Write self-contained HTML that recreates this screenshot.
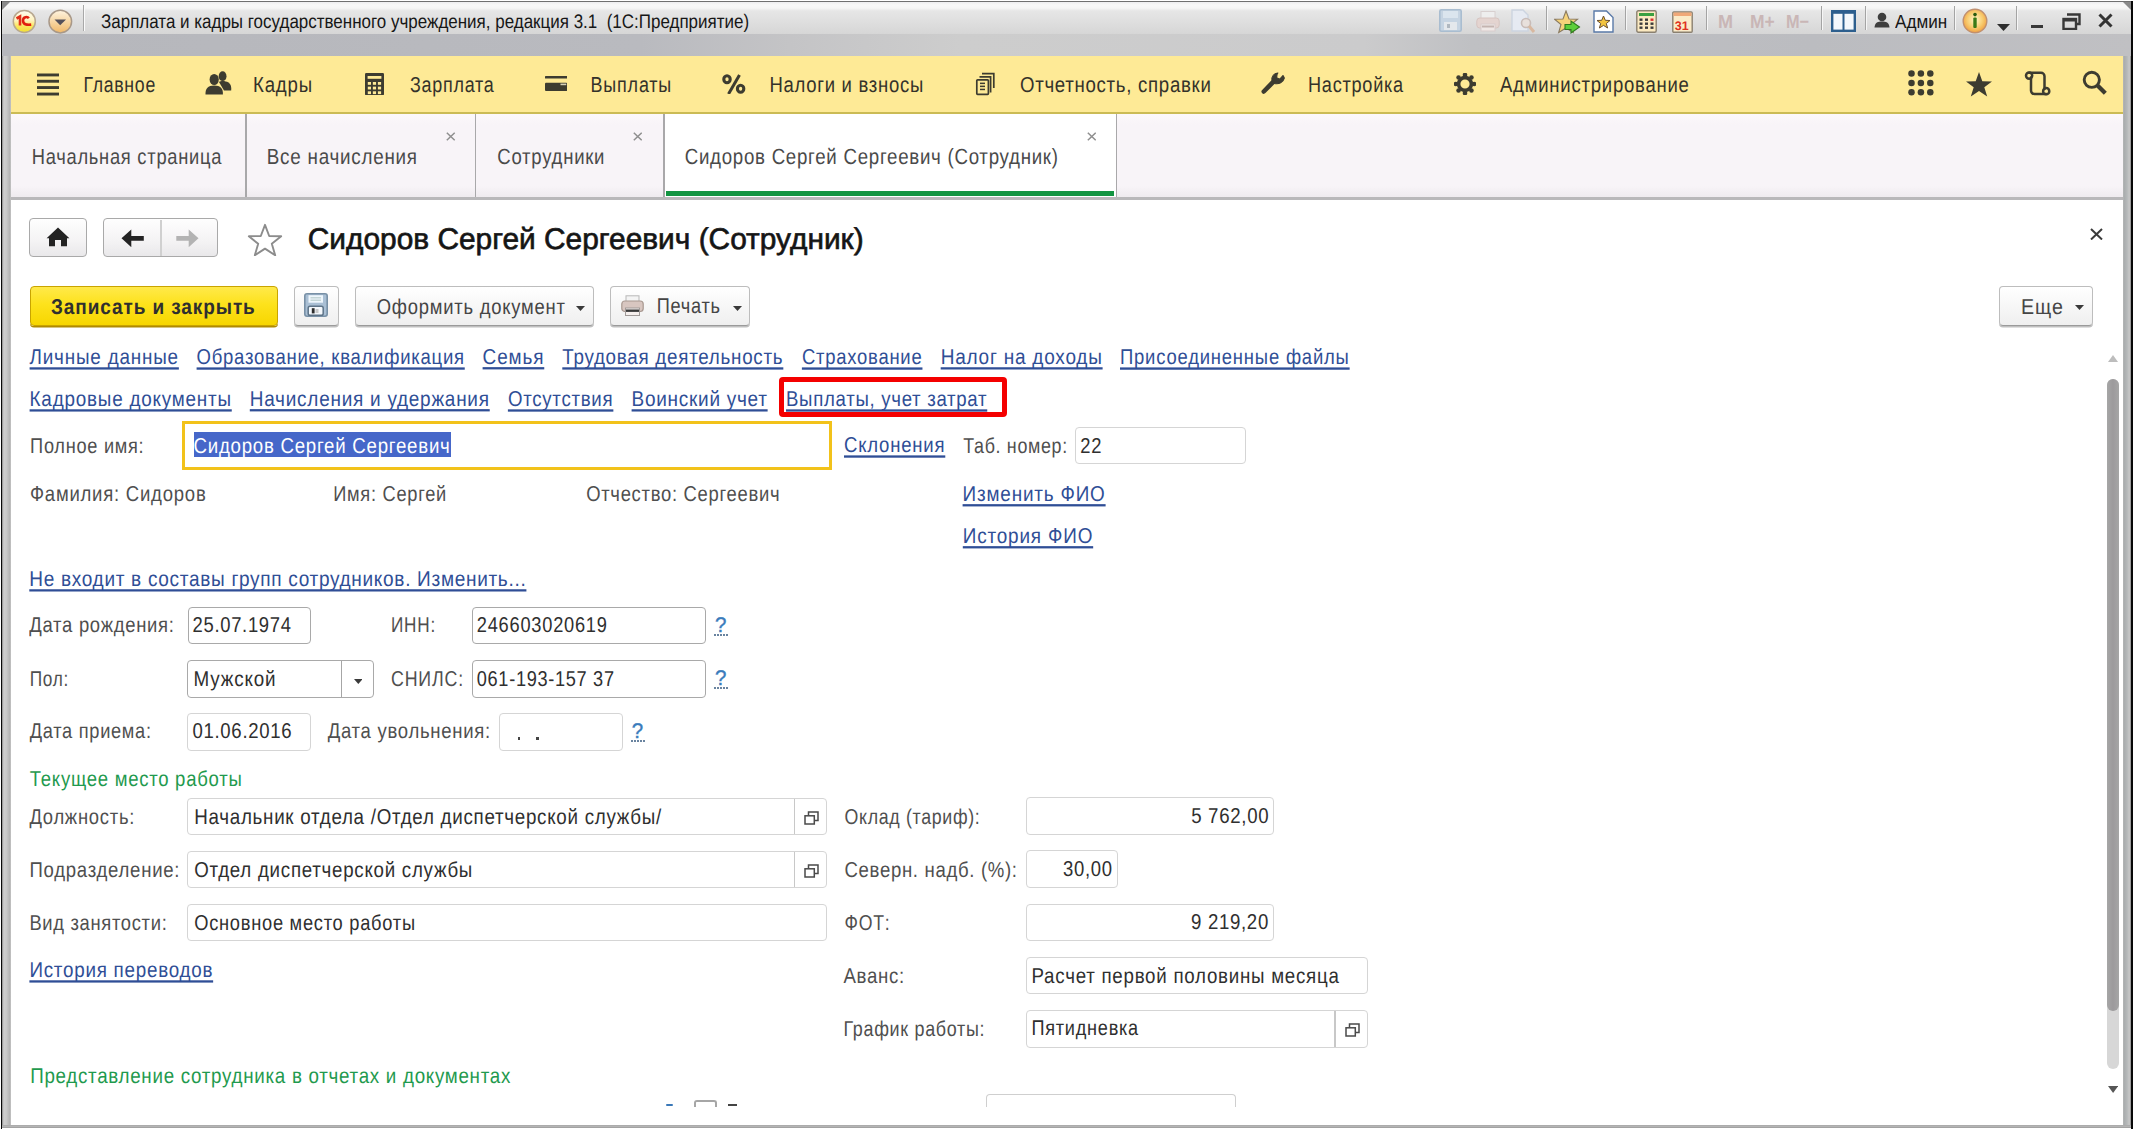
<!DOCTYPE html>
<html><head><meta charset="utf-8"><style>
html,body{margin:0;padding:0;width:2134px;height:1130px;overflow:hidden;background:#fff}
body{position:relative;font-family:"Liberation Sans",sans-serif;text-rendering:geometricPrecision}
div{position:absolute;white-space:nowrap}
.bm{display:inline-block;width:0;height:0;vertical-align:baseline}
</style></head><body>
<div style="left:0.0px;top:0.0px;width:2134.0px;height:1130.0px;background:#fff"></div>
<div style="left:2.4px;top:2.0px;width:2128.6px;height:54.0px;background:linear-gradient(#eeeef0 0px,#f8f8f8 3px,#f6f6f6 6px,#e6e6e6 9px,#e2e2e2 15px,#d6d6d6 32px,#cccccc 34px,#c6c6c8 56px)"></div>
<div style="left:2.4px;top:34.0px;width:2128.6px;height:22.0px;background:linear-gradient(90deg,#b6b7bc 0%,#b9babf 30%,#c4c4c6 37%,#cdcdcd 45%,#cbcbcc 64%,#bfc0c3 69%,#bbbcc0 85%,#c0c0c3 100%)"></div>
<div style="left:1.0px;top:1.0px;width:2132.0px;height:1.2px;background:#707070"></div>
<svg style="position:absolute;left:2.0px;top:2.0px;width:8.0px;height:8.0px" viewBox="0 0 8 8" preserveAspectRatio="none"><path d="M0 0 H8 L0 8 Z" fill="#8a8a8a"/></svg>
<svg style="position:absolute;left:2123.0px;top:2.0px;width:8.0px;height:8.0px" viewBox="0 0 8 8" preserveAspectRatio="none"><path d="M0 0 H8 V8 Z" fill="#8a8a8a"/></svg>
<div style="left:2.4px;top:55.5px;width:8.2px;height:1070.5px;background:linear-gradient(90deg,#8a8a8a 0,#cfcfcf 20%,#c8c8c8 50%,#b2b2b2 88%,#c8c8c8 100%)"></div>
<div style="left:2123.4px;top:55.5px;width:7.5px;height:1070.5px;background:linear-gradient(90deg,#c0c0c0 0,#a8abac 10%,#b5b8b9 50%,#c8c8c8 80%,#888 100%)"></div>
<div style="left:0.9px;top:1.0px;width:1.5px;height:1127.5px;background:#080808"></div>
<div style="left:2130.9px;top:1.0px;width:2.2px;height:1127.5px;background:#080808"></div>
<div style="left:2.4px;top:1124.6px;width:2128.5px;height:3.9px;background:linear-gradient(#a8a8a8,#b4b4b4 50%,#9a9a9a)"></div>
<svg style="position:absolute;left:12.0px;top:9.0px;width:25.0px;height:25.0px" viewBox="0 0 25 25" preserveAspectRatio="none"><defs><linearGradient id="g1c" x1="0" y1="0" x2="0" y2="1"><stop offset="0" stop-color="#fffef0"/><stop offset="0.45" stop-color="#fff3c0"/><stop offset="0.7" stop-color="#fbe860"/><stop offset="1" stop-color="#f2e030"/></linearGradient></defs>
<circle cx="12.3" cy="12.4" r="11" fill="url(#g1c)" stroke="#b8a890" stroke-width="1.5"/>
<path d="M4.5 9.5 L8 7.5 V16.5" fill="none" stroke="#e0301a" stroke-width="2.6"/>
<path d="M16.8 9.3 C15.5 7.3 11 7.6 11 11.5 C11 15.5 14.5 16 19.2 15.6" fill="none" stroke="#e02010" stroke-width="2.6"/></svg>
<svg style="position:absolute;left:48.0px;top:9.0px;width:25.0px;height:25.0px" viewBox="0 0 25 25" preserveAspectRatio="none"><defs><linearGradient id="gdd" x1="0" y1="0" x2="0" y2="1"><stop offset="0" stop-color="#fff4e0"/><stop offset="0.4" stop-color="#f8dcb0"/><stop offset="1" stop-color="#f0b868"/></linearGradient></defs>
<circle cx="12.3" cy="12.6" r="11.3" fill="url(#gdd)" stroke="#a89888" stroke-width="1.5"/>
<path d="M6.5 10.4 L18 10.4 L12.2 16.2 Z" fill="#54505a"/></svg>
<div style="left:83.0px;top:5.0px;width:1.2px;height:26.0px;background:#a8a8a8"></div>
<div style="left:84.2px;top:5.0px;width:1.0px;height:26.0px;background:#fafafa"></div>
<div style="left:101.0px;top:13.33px;font-size:19.20px;line-height:19.20px;color:#161616;transform:scale(0.885,1.020);transform-origin:0 16.25px;"><span class="bm"></span>Зарплата и кадры государственного учреждения, редакция 3.1&nbsp;&nbsp;(1С:Предприятие)</div>
<svg style="position:absolute;left:1439.0px;top:9.0px;width:23.0px;height:23.0px" viewBox="0 0 23 23" preserveAspectRatio="none"><rect x="0.8" y="0.8" width="21.4" height="21.4" rx="1.5" fill="#c6d4e2" stroke="#a9bdd0" stroke-width="1.6"/>
<rect x="4" y="2" width="15" height="7" fill="#dbe5ee"/><rect x="5" y="13" width="13" height="8" fill="#e4e8ec"/><rect x="8" y="15" width="3" height="4" fill="#b0b8c0"/></svg>
<svg style="position:absolute;left:1476.0px;top:11.0px;width:24.0px;height:21.0px" viewBox="0 0 24 21" preserveAspectRatio="none"><rect x="5" y="0.5" width="14" height="8" fill="#eee" stroke="#d8d0d0"/>
<rect x="0.8" y="7" width="22.4" height="10" rx="3" fill="#e4d4d0" stroke="#d6c4c0"/>
<rect x="5" y="13" width="14" height="7" fill="#efe8e6" stroke="#d8cccc"/><rect x="6" y="14.5" width="12" height="2" fill="#c4b4b0"/></svg>
<svg style="position:absolute;left:1511.0px;top:9.0px;width:25.0px;height:24.0px" viewBox="0 0 25 24" preserveAspectRatio="none"><path d="M1 1 H12 L17 6 V22 H1 Z" fill="#e6eaf2" stroke="#ccd4e0" stroke-width="1.4"/>
<circle cx="15" cy="14" r="4.5" fill="#e8e0dc" stroke="#c8bcb8" stroke-width="1.6"/><path d="M18 17 L23 23" stroke="#d8b8a0" stroke-width="3"/></svg>
<div style="left:1546.0px;top:6.0px;width:1.0px;height:24.0px;background:#a4a4a4"></div>
<div style="left:1547.0px;top:6.0px;width:1.0px;height:24.0px;background:#f6f6f6"></div>
<svg style="position:absolute;left:1554.0px;top:10.0px;width:27.0px;height:24.0px" viewBox="0 0 27 24" preserveAspectRatio="none"><path d="M12 1 L15 9 L23.5 9.3 L17 14.5 L19.3 22.5 L12 18 L4.7 22.5 L7 14.5 L0.5 9.3 L9 9 Z" fill="#f6d37a" stroke="#8a7a60" stroke-width="1.1"/>
<path d="M11 14.5 H17 V11 L25.5 17 L17 23 V19.5 H11 Z" fill="#5ccf3a" stroke="#2e7a20" stroke-width="1.1"/></svg>
<svg style="position:absolute;left:1593.0px;top:10.0px;width:21.0px;height:23.0px" viewBox="0 0 21 23" preserveAspectRatio="none"><path d="M1 1 H13.5 L20 7.5 V22 H1 Z" fill="#ffffff" stroke="#5a7aa8" stroke-width="1.4"/>
<path d="M10.5 6 L12.3 10.3 L17 10.5 L13.3 13.5 L14.6 18 L10.5 15.4 L6.4 18 L7.7 13.5 L4 10.5 L8.7 10.3 Z" fill="#f2c440" stroke="#6a5030" stroke-width="1"/></svg>
<div style="left:1625.0px;top:6.0px;width:1.0px;height:24.0px;background:#a4a4a4"></div>
<div style="left:1626.0px;top:6.0px;width:1.0px;height:24.0px;background:#f6f6f6"></div>
<svg style="position:absolute;left:1636.0px;top:10.0px;width:21.0px;height:23.0px" viewBox="0 0 21 23" preserveAspectRatio="none"><rect x="0.8" y="0.8" width="19.4" height="21.4" rx="1.5" fill="#fbe9c0" stroke="#8a8070" stroke-width="1.4"/>
<rect x="3" y="3" width="15" height="3" fill="#3aa040"/>
<g fill="#3c3c3c"><rect x="3.5" y="8.5" width="3" height="2.4"/><rect x="9" y="8.5" width="3" height="2.4"/><rect x="14.5" y="8.5" width="3" height="2.4" fill="#d83030"/>
<rect x="3.5" y="12.5" width="3" height="2.4"/><rect x="9" y="12.5" width="3" height="2.4"/><rect x="14.5" y="12.5" width="3" height="2.4"/>
<rect x="3.5" y="16.5" width="3" height="2.4"/><rect x="9" y="16.5" width="3" height="2.4"/><rect x="14.5" y="16.5" width="3" height="2.4"/></g></svg>
<svg style="position:absolute;left:1672.0px;top:10.0px;width:21.0px;height:23.0px" viewBox="0 0 21 23" preserveAspectRatio="none"><rect x="0.8" y="2" width="19.4" height="20.2" rx="1" fill="#fbebc8" stroke="#8a8070" stroke-width="1.4"/>
<rect x="1.5" y="2.5" width="18" height="3.5" fill="#f0a878"/>
<text x="2.8" y="19.5" font-family="Liberation Sans" font-weight="bold" font-size="12.5" fill="#e03020">31</text></svg>
<div style="left:1705.6px;top:6.0px;width:1.0px;height:24.0px;background:#a4a4a4"></div>
<div style="left:1706.6px;top:6.0px;width:1.0px;height:24.0px;background:#f6f6f6"></div>
<div style="left:1717.5px;top:13.01px;font-size:19.00px;line-height:19.00px;color:#c9b6b6;font-weight:bold;transform:scale(0.950,1.000);transform-origin:0 16.08px;"><span class="bm"></span>M</div>
<div style="left:1749.5px;top:13.01px;font-size:19.00px;line-height:19.00px;color:#c9b6b6;font-weight:bold;transform:scale(0.920,1.000);transform-origin:0 16.08px;"><span class="bm"></span>M+</div>
<div style="left:1785.5px;top:13.01px;font-size:19.00px;line-height:19.00px;color:#c9b6b6;font-weight:bold;transform:scale(0.860,1.000);transform-origin:0 16.08px;"><span class="bm"></span>M−</div>
<div style="left:1821.0px;top:6.0px;width:1.0px;height:24.0px;background:#a4a4a4"></div>
<div style="left:1822.0px;top:6.0px;width:1.0px;height:24.0px;background:#f6f6f6"></div>
<svg style="position:absolute;left:1831.0px;top:10.0px;width:25.0px;height:22.0px" viewBox="0 0 25 22" preserveAspectRatio="none"><rect x="1.2" y="1.2" width="22.6" height="19.6" fill="#f4f8fc" stroke="#2d5f8e" stroke-width="2.4"/>
<rect x="1.2" y="1.2" width="22.6" height="2.6" fill="#2d5f8e"/><rect x="11.5" y="2" width="2" height="19" fill="#2d5f8e"/></svg>
<div style="left:1864.5px;top:6.0px;width:1.0px;height:24.0px;background:#a4a4a4"></div>
<div style="left:1865.5px;top:6.0px;width:1.0px;height:24.0px;background:#f6f6f6"></div>
<svg style="position:absolute;left:1874.0px;top:12.0px;width:16.0px;height:16.0px" viewBox="0 0 16 16" preserveAspectRatio="none"><circle cx="8" cy="5" r="4.3" fill="#3e3e3e"/><path d="M0.5 15.5 C1 10 4 9.5 8 9.5 C12 9.5 15 10 15.5 15.5 Z" fill="#3e3e3e"/></svg>
<div style="left:1895.4px;top:12.60px;font-size:19.00px;line-height:19.00px;color:#161616;transform:scale(0.900,1.000);transform-origin:0 16.08px;"><span class="bm"></span>Админ</div>
<div style="left:1953.8px;top:6.0px;width:1.0px;height:24.0px;background:#a4a4a4"></div>
<div style="left:1954.8px;top:6.0px;width:1.0px;height:24.0px;background:#f6f6f6"></div>
<svg style="position:absolute;left:1962.0px;top:8.0px;width:26.0px;height:26.0px" viewBox="0 0 26 26" preserveAspectRatio="none"><defs><radialGradient id="gin" cx="50%" cy="45%" r="55%"><stop offset="0" stop-color="#fff8c8"/><stop offset="0.6" stop-color="#f8cc70"/><stop offset="1" stop-color="#f0a040"/></radialGradient></defs>
<circle cx="13" cy="13" r="11.8" fill="url(#gin)" stroke="#c09070" stroke-width="1.4"/>
<circle cx="13" cy="6.6" r="1.8" fill="#2a5a10"/><rect x="11.3" y="9.6" width="3.4" height="10.5" rx="1" fill="#3a7a18"/></svg>
<svg style="position:absolute;left:1996.5px;top:24.0px;width:13.0px;height:7.0px" viewBox="0 0 13 7" preserveAspectRatio="none"><path d="M0 0 H13 L6.5 7 Z" fill="#2e2e2e"/></svg>
<div style="left:2016.3px;top:6.0px;width:1.0px;height:24.0px;background:#a4a4a4"></div>
<div style="left:2017.3px;top:6.0px;width:1.0px;height:24.0px;background:#f6f6f6"></div>
<div style="left:2031.0px;top:24.5px;width:11.5px;height:3.0px;background:#383838"></div>
<svg style="position:absolute;left:2062.0px;top:13.0px;width:19.0px;height:17.0px" viewBox="0 0 19 17" preserveAspectRatio="none"><path d="M5 1.5 H17.5 V11 H14.5" fill="none" stroke="#383838" stroke-width="2.4"/><rect x="1.5" y="6" width="12.5" height="10" fill="none" stroke="#383838" stroke-width="2.4"/><rect x="1.5" y="6" width="12.5" height="2.5" fill="#383838"/></svg>
<svg style="position:absolute;left:2098.0px;top:13.0px;width:15.0px;height:15.0px" viewBox="0 0 15 15" preserveAspectRatio="none"><path d="M1.5 1.5 L13.5 13.5 M13.5 1.5 L1.5 13.5" stroke="#343434" stroke-width="3"/></svg>
<div style="left:10.5px;top:55.5px;width:2112.5px;height:56.5px;background:#feea96"></div>
<div style="left:10.5px;top:111.8px;width:2112.5px;height:2.0px;background:#cbbb55"></div>
<svg style="position:absolute;left:36.8px;top:72.5px;width:22.2px;height:23.5px" viewBox="0 0 22.2 23.5" preserveAspectRatio="none"><rect x="0" y="0.5" width="22.2" height="2.9" fill="#3d3c30"/><rect x="0" y="6.8" width="22.2" height="2.9" fill="#3d3c30"/><rect x="0" y="13.1" width="22.2" height="2.9" fill="#3d3c30"/><rect x="0" y="19.6" width="22.2" height="2.9" fill="#3d3c30"/></svg>
<div style="left:83.4px;top:77.93px;font-size:17.67px;line-height:17.67px;color:#34322a;letter-spacing:0.726px;transform:scale(1.000,1.226);transform-origin:0 14.96px;"><span class="bm"></span>Главное</div>
<svg style="position:absolute;left:204.0px;top:69.0px;width:28.0px;height:27.0px" viewBox="0 0 28 27" preserveAspectRatio="none"><g fill="#3d3c30"><ellipse cx="18.6" cy="7.2" rx="3.9" ry="4.9"/><path d="M15 13 C17 11.5 21 11.5 24.5 13.5 C27 15 27.5 18 27.2 21.5 H20 Z"/>
<ellipse cx="10.2" cy="10.5" rx="4.6" ry="5.6"/><path d="M1.5 25.5 C1.2 19.5 4 16.5 10.2 16.5 C16.5 16.5 19.2 19.5 18.9 25.5 Z"/></g></svg>
<div style="left:253.0px;top:76.84px;font-size:18.62px;line-height:18.62px;color:#34322a;letter-spacing:0.840px;transform:scale(1.000,1.164);transform-origin:0 15.76px;"><span class="bm"></span>Кадры</div>
<svg style="position:absolute;left:365.0px;top:72.7px;width:19.0px;height:22.3px" viewBox="0 0 19 22.3" preserveAspectRatio="none"><rect x="0" y="0" width="19" height="22.3" rx="1.2" fill="#3d3c30"/><rect x="2.6" y="3" width="13.8" height="2.8" fill="#feea96"/>
<g fill="#feea96"><rect x="2.8" y="9" width="3.2" height="2.8"/><rect x="7.85" y="9" width="3.2" height="2.8"/><rect x="12.9" y="9" width="3.2" height="2.8"/><rect x="2.8" y="13.65" width="3.2" height="2.8"/><rect x="7.85" y="13.65" width="3.2" height="2.8"/><rect x="12.9" y="13.65" width="3.2" height="2.8"/><rect x="2.8" y="18.3" width="3.2" height="2.8"/><rect x="7.85" y="18.3" width="3.2" height="2.8"/><rect x="12.9" y="18.3" width="3.2" height="2.8"/></g></svg>
<div style="left:410.0px;top:77.96px;font-size:17.95px;line-height:17.95px;color:#34322a;letter-spacing:0.739px;transform:scale(1.000,1.208);transform-origin:0 15.19px;"><span class="bm"></span>Зарплата</div>
<svg style="position:absolute;left:544.8px;top:76.0px;width:22.2px;height:15.0px" viewBox="0 0 22.2 15" preserveAspectRatio="none"><rect x="0" y="0" width="22.2" height="2.6" rx="0.6" fill="#3d3c30"/><rect x="0" y="6.8" width="22.2" height="8.2" rx="1" fill="#3d3c30"/><rect x="15.5" y="7.6" width="5.8" height="1.6" fill="#d9d3b8"/></svg>
<div style="left:590.6px;top:77.96px;font-size:17.95px;line-height:17.95px;color:#34322a;letter-spacing:0.815px;transform:scale(1.000,1.207);transform-origin:0 15.20px;"><span class="bm"></span>Выплаты</div>
<svg style="position:absolute;left:722.0px;top:73.5px;width:24.0px;height:20.5px" viewBox="0 0 24 20.5" preserveAspectRatio="none"><g fill="none" stroke="#3d3c30" stroke-width="3.1"><ellipse cx="5" cy="5.2" rx="3.2" ry="3.5"/><ellipse cx="18.6" cy="14.8" rx="3.2" ry="3.5"/></g><path d="M17.5 1 L6.5 20" stroke="#3d3c30" stroke-width="3"/></svg>
<div style="left:769.4px;top:76.82px;font-size:18.50px;line-height:18.50px;color:#34322a;letter-spacing:0.721px;transform:scale(1.000,1.172);transform-origin:0 15.66px;"><span class="bm"></span>Налоги и взносы</div>
<svg style="position:absolute;left:975.0px;top:72.0px;width:21.0px;height:24.0px" viewBox="0 0 21 24" preserveAspectRatio="none"><g fill="none" stroke="#3d3c30" stroke-width="1.7"><rect x="1.8" y="7.8" width="11.6" height="14.6" rx="0.8"/><path d="M4.5 4.8 H15.6 V20.5"/><path d="M7 1.6 H18.8 V16"/></g>
<g fill="#3d3c30"><rect x="5" y="10.6" width="5" height="1.5"/><rect x="5" y="13.6" width="5" height="1.5"/><rect x="5" y="16.7" width="5" height="1.5"/></g></svg>
<div style="left:1020.0px;top:76.83px;font-size:18.64px;line-height:18.64px;color:#34322a;letter-spacing:0.706px;transform:scale(1.000,1.162);transform-origin:0 15.78px;"><span class="bm"></span>Отчетность, справки</div>
<svg style="position:absolute;left:1260.0px;top:70.0px;width:28.0px;height:27.0px" viewBox="0 0 28 27" preserveAspectRatio="none"><path d="M3.8 21.5 L14.5 10.6" stroke="#3d3c30" stroke-width="4.6" stroke-linecap="round"/>
<path d="M17.8 3 C14 3.5 11.5 6.5 12 10.5 L14.5 13.5 C19 14.5 23 12.5 24.3 8 L23 5.6 L19.8 9.2 L16.6 7.8 L17 4.5 Z" fill="#3d3c30" stroke="#3d3c30" stroke-width="1.2" stroke-linejoin="round"/></svg>
<div style="left:1308.0px;top:76.78px;font-size:18.14px;line-height:18.14px;color:#34322a;letter-spacing:0.747px;transform:scale(1.000,1.195);transform-origin:0 15.35px;"><span class="bm"></span>Настройка</div>
<svg style="position:absolute;left:1454.4px;top:72.6px;width:22.0px;height:22.0px" viewBox="0 0 22 22" preserveAspectRatio="none"><g fill="#3d3c30"><circle cx="20.10" cy="11.00" r="2.3"/><circle cx="17.43" cy="17.43" r="2.3"/><circle cx="11.00" cy="20.10" r="2.3"/><circle cx="4.57" cy="17.43" r="2.3"/><circle cx="1.90" cy="11.00" r="2.3"/><circle cx="4.57" cy="4.57" r="2.3"/><circle cx="11.00" cy="1.90" r="2.3"/><circle cx="17.43" cy="4.57" r="2.3"/></g><circle cx="11" cy="11" r="6.4" fill="none" stroke="#3d3c30" stroke-width="3.6"/></svg>
<div style="left:1500.0px;top:76.81px;font-size:18.50px;line-height:18.50px;color:#34322a;letter-spacing:0.781px;transform:scale(1.000,1.171);transform-origin:0 15.66px;"><span class="bm"></span>Администрирование</div>
<svg style="position:absolute;left:1907.8px;top:69.7px;width:26.4px;height:26.3px" viewBox="0 0 26.4 26.3" preserveAspectRatio="none"><g fill="#3d3c30"><circle cx="3.50" cy="3.50" r="3.25"/><circle cx="12.90" cy="3.50" r="3.25"/><circle cx="22.30" cy="3.50" r="3.25"/><circle cx="3.50" cy="12.90" r="3.25"/><circle cx="12.90" cy="12.90" r="3.25"/><circle cx="22.30" cy="12.90" r="3.25"/><circle cx="3.50" cy="22.30" r="3.25"/><circle cx="12.90" cy="22.30" r="3.25"/><circle cx="22.30" cy="22.30" r="3.25"/></g></svg>
<svg style="position:absolute;left:1965.0px;top:70.5px;width:28.0px;height:26.0px" viewBox="0 0 28 26" preserveAspectRatio="none"><path d="M14 1 L17.3 10.2 L27 10.4 L19.3 16.3 L22.2 25.5 L14 19.9 L5.8 25.5 L8.7 16.3 L1 10.4 L10.7 10.2 Z" fill="#3d3c30"/></svg>
<svg style="position:absolute;left:2024.0px;top:70.5px;width:28.0px;height:25.5px" viewBox="0 0 28 25.5" preserveAspectRatio="none"><g fill="none" stroke="#3d3c30" stroke-width="2.5" stroke-linejoin="round" stroke-linecap="round"><path d="M5.1 1.8 H17 C19 1.8 20.5 3.3 20.5 5.3 V18"/><path d="M7 6.5 V19.5 C7 21.5 8.5 23 10.5 23 H22"/>
<circle cx="5.1" cy="4.6" r="3.1"/><circle cx="22.2" cy="20.2" r="3.1"/></g></svg>
<svg style="position:absolute;left:2082.0px;top:70.0px;width:26.0px;height:26.0px" viewBox="0 0 26 26" preserveAspectRatio="none"><circle cx="9.8" cy="9.8" r="7.6" fill="none" stroke="#3d3c30" stroke-width="2.9"/><path d="M15.3 15.3 L23.3 23.3" stroke="#3d3c30" stroke-width="4.2"/></svg>
<div style="left:10.5px;top:113.8px;width:2112.5px;height:83.7px;background:linear-gradient(#fcf8fa 0px,#f8f4f8 11px,#f8f4f8 72px,#efebef 83px)"></div>
<div style="left:10.5px;top:197.0px;width:2112.5px;height:2.5px;background:#b9b8ba"></div>
<div style="left:664.0px;top:113.8px;width:452.0px;height:83.7px;background:#ffffff"></div>
<div style="left:245.3px;top:113.8px;width:1.4px;height:83.7px;background:#a9a8aa"></div>
<div style="left:475.0px;top:113.8px;width:1.4px;height:83.7px;background:#a9a8aa"></div>
<div style="left:663.3px;top:113.8px;width:1.4px;height:83.7px;background:#a9a8aa"></div>
<div style="left:1116.0px;top:113.8px;width:1.4px;height:83.7px;background:#a9a8aa"></div>
<div style="left:665.5px;top:191.4px;width:448.2px;height:4.7px;background:#129441"></div>
<div style="left:31.7px;top:148.70px;font-size:18.32px;line-height:18.32px;color:#4a4a4a;letter-spacing:0.741px;transform:scale(1.000,1.198);transform-origin:0 15.51px;"><span class="bm"></span>Начальная страница</div>
<div style="left:266.8px;top:148.76px;font-size:18.83px;line-height:18.83px;color:#4a4a4a;letter-spacing:0.755px;transform:scale(1.000,1.166);transform-origin:0 15.94px;"><span class="bm"></span>Все начисления</div>
<div style="left:497.3px;top:148.74px;font-size:18.54px;line-height:18.54px;color:#4a4a4a;letter-spacing:0.756px;transform:scale(1.000,1.184);transform-origin:0 15.70px;"><span class="bm"></span>Сотрудники</div>
<div style="left:684.7px;top:148.74px;font-size:18.69px;line-height:18.69px;color:#4a4a4a;letter-spacing:0.727px;transform:scale(1.000,1.175);transform-origin:0 15.82px;"><span class="bm"></span>Сидоров Сергей Сергеевич (Сотрудник)</div>
<svg style="position:absolute;left:446.0px;top:132.3px;width:9.5px;height:9.0px" viewBox="0 0 9.5 9" preserveAspectRatio="none"><path d="M0.8 0.8 L8.7 8.2 M8.7 0.8 L0.8 8.2" stroke="#8f8f8f" stroke-width="1.5"/></svg>
<svg style="position:absolute;left:632.8px;top:132.3px;width:9.5px;height:9.0px" viewBox="0 0 9.5 9" preserveAspectRatio="none"><path d="M0.8 0.8 L8.7 8.2 M8.7 0.8 L0.8 8.2" stroke="#8f8f8f" stroke-width="1.5"/></svg>
<svg style="position:absolute;left:1086.8px;top:132.0px;width:9.5px;height:9.0px" viewBox="0 0 9.5 9" preserveAspectRatio="none"><path d="M0.8 0.8 L8.7 8.2 M8.7 0.8 L0.8 8.2" stroke="#8f8f8f" stroke-width="1.5"/></svg>
<div style="left:29.2px;top:218.3px;width:57.5px;height:38.6px;border:1.6px solid #a9a9a9;border-radius:4px;background:linear-gradient(#fefefe,#f4f3f4 60%,#e9e8ea);box-sizing:border-box"></div>
<svg style="position:absolute;left:46.0px;top:227.0px;width:24.0px;height:20.0px" viewBox="0 0 24 20" preserveAspectRatio="none"><path d="M0.6 11.2 L12 0.5 L23.4 11.2 H21 V19.3 H15 V13 H9 V19.3 H3 V11.2 Z" fill="#232323"/></svg>
<div style="left:102.8px;top:218.3px;width:115.4px;height:38.6px;border:1.6px solid #a9a9a9;border-radius:4px;background:linear-gradient(#fefefe,#f4f3f4 60%,#e9e8ea);box-sizing:border-box"></div>
<div style="left:160.2px;top:219.5px;width:1.4px;height:36.0px;background:#d0d0d0"></div>
<svg style="position:absolute;left:120.5px;top:228.5px;width:23.5px;height:18.5px" viewBox="0 0 23.5 18.5" preserveAspectRatio="none"><path d="M0.5 9.3 L10.3 0.4 V6.9 H22.8 V11.7 H10.3 V18.2 Z" fill="#232323"/></svg>
<svg style="position:absolute;left:175.5px;top:228.5px;width:23.0px;height:18.5px" viewBox="0 0 23 18.5" preserveAspectRatio="none"><path d="M22.5 9.3 L12.7 0.4 V6.9 H0.3 V11.7 H12.7 V18.2 Z" fill="#b3b3b3"/></svg>
<svg style="position:absolute;left:246.5px;top:222.5px;width:36.0px;height:33.5px" viewBox="0 0 36 33.5" preserveAspectRatio="none"><path d="M18 1.8 L22.2 13 L34.2 13.3 L24.8 20.8 L28.2 32.3 L18 25.6 L7.8 32.3 L11.2 20.8 L1.8 13.3 L13.8 13 Z" fill="#fff" stroke="#8c8c8c" stroke-width="1.9" stroke-linejoin="round"/></svg>
<div style="left:307.8px;top:224.81px;font-size:29.87px;line-height:29.87px;color:#151515;-webkit-text-stroke:0.65px #151515;"><span class="bm"></span>Сидоров Сергей Сергеевич (Сотрудник)</div>
<svg style="position:absolute;left:2089.5px;top:227.5px;width:13.0px;height:12.5px" viewBox="0 0 13 12.5" preserveAspectRatio="none"><path d="M1 1 L12 11.5 M12 1 L1 11.5" stroke="#3a3a3a" stroke-width="2"/></svg>
<div style="left:29.9px;top:286.0px;width:248.5px;height:40.0px;border:1.5px solid #c9a400;border-radius:4px;background:linear-gradient(#ffe94a,#fde21c 45%,#f7d600);box-sizing:border-box;box-shadow:0 1.5px 0 #b08a00"></div>
<div style="left:51.0px;top:298.64px;font-size:19.01px;line-height:19.01px;color:#2f2f2f;font-weight:bold;letter-spacing:0.910px;transform:scale(1.000,1.126);transform-origin:0 16.09px;"><span class="bm"></span>Записать и закрыть</div>
<div style="left:293.7px;top:286.0px;width:45.8px;height:39.5px;border:1.5px solid #bdbdbd;border-bottom-color:#9a9a9a;border-radius:4px;background:linear-gradient(#ffffff,#f7f7f7 50%,#efefef);box-sizing:border-box;box-shadow:0 1.5px 0 #bfbfbf"></div>
<svg style="position:absolute;left:304.0px;top:292.5px;width:24.0px;height:24.5px" viewBox="0 0 24 24.5" preserveAspectRatio="none"><rect x="0.8" y="0.8" width="22.4" height="22.4" rx="2.2" fill="#a9bfd4" stroke="#7890a6" stroke-width="1.6"/>
<rect x="4.5" y="2.2" width="14.5" height="7.5" fill="#eef6fc"/><rect x="6.5" y="4.2" width="10.5" height="1.2" fill="#b8cccc"/><rect x="6.5" y="6.6" width="10.5" height="1.2" fill="#b8cccc"/>
<rect x="4.2" y="13.2" width="15" height="9" rx="1.8" fill="#f4f8fc" stroke="#5e7488" stroke-width="1.5"/><rect x="7.8" y="15.2" width="2.8" height="5.2" fill="#2c2c2c"/><rect x="11.5" y="16" width="3" height="4" fill="#c8c8c8"/></svg>
<div style="left:355.0px;top:286.0px;width:239.3px;height:39.5px;border:1.5px solid #bdbdbd;border-bottom-color:#9a9a9a;border-radius:4px;background:linear-gradient(#ffffff,#f7f7f7 50%,#efefef);box-sizing:border-box;box-shadow:0 1.5px 0 #bfbfbf"></div>
<div style="left:376.7px;top:298.51px;font-size:18.41px;line-height:18.41px;color:#454545;letter-spacing:0.778px;transform:scale(1.000,1.170);transform-origin:0 15.59px;"><span class="bm"></span>Оформить документ</div>
<svg style="position:absolute;left:575.5px;top:305.5px;width:9.0px;height:5.0px" viewBox="0 0 9 5" preserveAspectRatio="none"><path d="M0 0 H9 L4.5 5 Z" fill="#3a3a3a"/></svg>
<div style="left:609.6px;top:286.0px;width:140.4px;height:39.5px;border:1.5px solid #bdbdbd;border-bottom-color:#9a9a9a;border-radius:4px;background:linear-gradient(#ffffff,#f7f7f7 50%,#efefef);box-sizing:border-box;box-shadow:0 1.5px 0 #bfbfbf"></div>
<svg style="position:absolute;left:620.5px;top:295.0px;width:23.5px;height:22.0px" viewBox="0 0 23.5 22" preserveAspectRatio="none"><rect x="5" y="0.8" width="13" height="6.5" fill="#f4f4f4" stroke="#b8b8b8" stroke-width="1"/>
<rect x="0.8" y="6" width="21.4" height="10.5" rx="3" fill="#d8c6c0" stroke="#a89890" stroke-width="1.2"/>
<rect x="4.5" y="13" width="14" height="7.5" fill="#f6f0ee" stroke="#a09a98" stroke-width="1"/><rect x="5" y="14.5" width="13" height="2.4" fill="#3a3a3a"/></svg>
<div style="left:656.7px;top:298.49px;font-size:18.17px;line-height:18.17px;color:#454545;letter-spacing:0.747px;transform:scale(1.000,1.185);transform-origin:0 15.38px;"><span class="bm"></span>Печать</div>
<svg style="position:absolute;left:732.5px;top:305.5px;width:9.0px;height:5.0px" viewBox="0 0 9 5" preserveAspectRatio="none"><path d="M0 0 H9 L4.5 5 Z" fill="#3a3a3a"/></svg>
<div style="left:1999.4px;top:286.0px;width:93.8px;height:40.0px;border:1.5px solid #bdbdbd;border-bottom-color:#9a9a9a;border-radius:4px;background:linear-gradient(#ffffff,#f7f7f7 50%,#efefef);box-sizing:border-box;box-shadow:0 1.5px 0 #bfbfbf"></div>
<div style="left:2021.0px;top:298.56px;font-size:19.65px;line-height:19.65px;color:#454545;letter-spacing:1.003px;transform:scale(1.000,1.096);transform-origin:0 16.64px;"><span class="bm"></span>Еще</div>
<svg style="position:absolute;left:2075.0px;top:305.0px;width:9.0px;height:5.0px" viewBox="0 0 9 5" preserveAspectRatio="none"><path d="M0 0 H9 L4.5 5 Z" fill="#3a3a3a"/></svg>
<div style="left:29.6px;top:349.35px;font-size:18.87px;line-height:18.87px;color:#2f4e96;letter-spacing:0.804px;transform:scale(1.000,1.142);transform-origin:0 15.97px;text-decoration:underline;text-decoration-skip-ink:none;text-decoration-thickness:1.6px;text-underline-offset:3.2px;"><span class="bm"></span>Личные данные</div>
<div style="left:196.6px;top:349.31px;font-size:18.50px;line-height:18.50px;color:#2f4e96;letter-spacing:0.751px;transform:scale(1.000,1.164);transform-origin:0 15.66px;text-decoration:underline;text-decoration-skip-ink:none;text-decoration-thickness:1.6px;text-underline-offset:3.2px;"><span class="bm"></span>Образование, квалификация</div>
<div style="left:482.6px;top:350.49px;font-size:18.95px;line-height:18.95px;color:#2f4e96;letter-spacing:0.864px;transform:scale(1.000,1.137);transform-origin:0 16.04px;text-decoration:underline;text-decoration-skip-ink:none;text-decoration-thickness:1.6px;text-underline-offset:3.2px;"><span class="bm"></span>Семья</div>
<div style="left:562.3px;top:349.33px;font-size:18.79px;line-height:18.79px;color:#2f4e96;letter-spacing:0.737px;transform:scale(1.000,1.146);transform-origin:0 15.90px;text-decoration:underline;text-decoration-skip-ink:none;text-decoration-thickness:1.6px;text-underline-offset:3.2px;"><span class="bm"></span>Трудовая деятельность</div>
<div style="left:801.9px;top:349.32px;font-size:18.46px;line-height:18.46px;color:#2f4e96;letter-spacing:0.768px;transform:scale(1.000,1.167);transform-origin:0 15.63px;text-decoration:underline;text-decoration-skip-ink:none;text-decoration-thickness:1.6px;text-underline-offset:3.2px;"><span class="bm"></span>Страхование</div>
<div style="left:940.7px;top:349.35px;font-size:19.05px;line-height:19.05px;color:#2f4e96;letter-spacing:0.756px;transform:scale(1.000,1.130);transform-origin:0 16.13px;text-decoration:underline;text-decoration-skip-ink:none;text-decoration-thickness:1.6px;text-underline-offset:3.2px;"><span class="bm"></span>Налог на доходы</div>
<div style="left:1120.0px;top:349.31px;font-size:18.44px;line-height:18.44px;color:#2f4e96;letter-spacing:0.804px;transform:scale(1.000,1.168);transform-origin:0 15.61px;text-decoration:underline;text-decoration-skip-ink:none;text-decoration-thickness:1.6px;text-underline-offset:3.2px;"><span class="bm"></span>Присоединенные файлы</div>
<div style="left:29.6px;top:390.54px;font-size:18.88px;line-height:18.88px;color:#2f4e96;letter-spacing:0.787px;transform:scale(1.000,1.141);transform-origin:0 15.98px;text-decoration:underline;text-decoration-skip-ink:none;text-decoration-thickness:1.6px;text-underline-offset:3.2px;"><span class="bm"></span>Кадровые документы</div>
<div style="left:249.8px;top:391.68px;font-size:18.96px;line-height:18.96px;color:#2f4e96;letter-spacing:0.764px;transform:scale(1.000,1.136);transform-origin:0 16.05px;text-decoration:underline;text-decoration-skip-ink:none;text-decoration-thickness:1.6px;text-underline-offset:3.2px;"><span class="bm"></span>Начисления и удержания</div>
<div style="left:507.9px;top:390.53px;font-size:18.65px;line-height:18.65px;color:#2f4e96;letter-spacing:0.739px;transform:scale(1.000,1.155);transform-origin:0 15.79px;text-decoration:underline;text-decoration-skip-ink:none;text-decoration-thickness:1.6px;text-underline-offset:3.2px;"><span class="bm"></span>Отсутствия</div>
<div style="left:631.6px;top:390.54px;font-size:18.98px;line-height:18.98px;color:#2f4e96;letter-spacing:0.733px;transform:scale(1.000,1.135);transform-origin:0 16.07px;text-decoration:underline;text-decoration-skip-ink:none;text-decoration-thickness:1.6px;text-underline-offset:3.2px;"><span class="bm"></span>Воинский учет</div>
<div style="left:786.0px;top:390.53px;font-size:18.63px;line-height:18.63px;color:#2f4e96;letter-spacing:0.705px;transform:scale(1.000,1.156);transform-origin:0 15.77px;text-decoration:underline;text-decoration-skip-ink:none;text-decoration-thickness:1.6px;text-underline-offset:3.2px;"><span class="bm"></span>Выплаты, учет затрат</div>
<div style="left:779.0px;top:376.8px;width:228.0px;height:39.9px;border:5px solid #f40000;border-radius:4px;box-sizing:border-box"></div>
<div style="left:30.1px;top:438.08px;font-size:18.19px;line-height:18.19px;color:#4f4f4f;letter-spacing:0.727px;transform:scale(1.000,1.184);transform-origin:0 15.40px;"><span class="bm"></span>Полное имя:</div>
<div style="left:182.1px;top:421.1px;width:650.3px;height:48.7px;border:3.7px solid #f2c21a;box-sizing:border-box"></div>
<div style="left:193.5px;top:432.3px;width:257.8px;height:24.7px;background:#4667c9"></div>
<div style="left:193.5px;top:438.12px;font-size:18.66px;line-height:18.66px;color:#ffffff;letter-spacing:0.750px;transform:scale(1.000,1.154);transform-origin:0 15.79px;"><span class="bm"></span>Сидоров Сергей Сергеевич</div>
<div style="left:844.0px;top:437.42px;font-size:18.54px;line-height:18.54px;color:#2f4e96;letter-spacing:0.788px;transform:scale(1.000,1.162);transform-origin:0 15.69px;text-decoration:underline;text-decoration-skip-ink:none;text-decoration-thickness:1.6px;text-underline-offset:3.2px;"><span class="bm"></span>Склонения</div>
<div style="left:963.3px;top:439.23px;font-size:17.89px;line-height:17.89px;color:#4f4f4f;letter-spacing:0.666px;transform:scale(1.000,1.204);transform-origin:0 15.15px;"><span class="bm"></span>Таб. номер:</div>
<div style="left:1075.0px;top:426.7px;width:171.0px;height:37.5px;border:1.8px solid #d5d5d5;border-radius:4px;box-sizing:border-box;background:#fff"></div>
<div style="left:1080.3px;top:438.11px;font-size:18.39px;line-height:18.39px;color:#2f2f2f;letter-spacing:0.770px;transform:scale(1.000,1.171);transform-origin:0 15.57px;"><span class="bm"></span>22</div>
<div style="left:30.0px;top:485.71px;font-size:18.53px;line-height:18.53px;color:#4f4f4f;letter-spacing:0.773px;transform:scale(1.000,1.163);transform-origin:0 15.68px;"><span class="bm"></span>Фамилия: Сидоров</div>
<div style="left:333.2px;top:485.68px;font-size:18.26px;line-height:18.26px;color:#4f4f4f;letter-spacing:0.724px;transform:scale(1.000,1.179);transform-origin:0 15.46px;"><span class="bm"></span>Имя: Сергей</div>
<div style="left:586.2px;top:485.91px;font-size:18.42px;line-height:18.42px;color:#4f4f4f;letter-spacing:0.715px;transform:scale(1.000,1.169);transform-origin:0 15.60px;"><span class="bm"></span>Отчество: Сергеевич</div>
<div style="left:962.6px;top:487.49px;font-size:18.89px;line-height:18.89px;color:#2f4e96;letter-spacing:0.835px;transform:scale(1.000,1.140);transform-origin:0 15.99px;text-decoration:underline;text-decoration-skip-ink:none;text-decoration-thickness:1.6px;text-underline-offset:3.2px;"><span class="bm"></span>Изменить ФИО</div>
<div style="left:962.8px;top:529.40px;font-size:18.91px;line-height:18.91px;color:#2f4e96;letter-spacing:0.830px;transform:scale(1.000,1.139);transform-origin:0 16.01px;text-decoration:underline;text-decoration-skip-ink:none;text-decoration-thickness:1.6px;text-underline-offset:3.2px;"><span class="bm"></span>История ФИО</div>
<div style="left:29.3px;top:571.46px;font-size:19.03px;line-height:19.03px;color:#2f4e96;letter-spacing:0.696px;transform:scale(1.000,1.132);transform-origin:0 16.11px;text-decoration:underline;text-decoration-skip-ink:none;text-decoration-thickness:1.6px;text-underline-offset:3.2px;"><span class="bm"></span>Не входит в составы групп сотрудников. Изменить...</div>
<div style="left:29.3px;top:617.40px;font-size:18.44px;line-height:18.44px;color:#4f4f4f;letter-spacing:0.727px;transform:scale(1.000,1.168);transform-origin:0 15.61px;"><span class="bm"></span>Дата рождения:</div>
<div style="left:187.6px;top:606.7px;width:123.8px;height:37.5px;border:1.9px solid #a9a9a9;border-radius:4px;box-sizing:border-box;background:#fff"></div>
<div style="left:192.5px;top:617.41px;font-size:18.43px;line-height:18.43px;color:#2f2f2f;letter-spacing:0.694px;transform:scale(1.000,1.168);transform-origin:0 15.60px;"><span class="bm"></span>25.07.1974</div>
<div style="left:391.0px;top:618.43px;font-size:17.15px;line-height:17.15px;color:#4f4f4f;letter-spacing:0.787px;transform:scale(1.000,1.256);transform-origin:0 14.51px;"><span class="bm"></span>ИНН:</div>
<div style="left:471.9px;top:606.6px;width:233.9px;height:37.6px;border:1.9px solid #a9a9a9;border-radius:4px;box-sizing:border-box;background:#fff"></div>
<div style="left:476.8px;top:617.39px;font-size:18.24px;line-height:18.24px;color:#2f2f2f;letter-spacing:0.764px;transform:scale(1.000,1.181);transform-origin:0 15.44px;"><span class="bm"></span>246603020619</div>
<div style="left:715.1px;top:616.15px;font-size:20.50px;line-height:20.50px;color:#3a7cbc;transform:scale(1.000,1.030);transform-origin:0 17.35px;-webkit-text-stroke:0.4px #3a7cbc;"><span class="bm"></span>?</div>
<div style="left:713.9px;top:633.9px;width:15.0px;height:2.2px;background-image:linear-gradient(90deg,#6a84a0 66%,transparent 66%);background-size:3px 100%"></div>
<div style="left:29.8px;top:671.85px;font-size:17.24px;line-height:17.24px;color:#4f4f4f;letter-spacing:0.686px;transform:scale(1.000,1.249);transform-origin:0 14.60px;"><span class="bm"></span>Пол:</div>
<div style="left:187.4px;top:659.8px;width:186.3px;height:38.0px;border:1.9px solid #a9a9a9;border-radius:4px;box-sizing:border-box;background:#fff"></div>
<div style="left:340.8px;top:660.5px;width:1.4px;height:36.5px;background:#a6a6a6"></div>
<svg style="position:absolute;left:353.6px;top:679.2px;width:8.6px;height:5.0px" viewBox="0 0 8.6 5" preserveAspectRatio="none"><path d="M0 0 H8.6 L4.3 5 Z" fill="#3a3a3a"/></svg>
<div style="left:193.6px;top:670.85px;font-size:18.84px;line-height:18.84px;color:#2f2f2f;letter-spacing:0.828px;transform:scale(1.000,1.143);transform-origin:0 15.95px;"><span class="bm"></span>Мужской</div>
<div style="left:391.0px;top:671.82px;font-size:17.78px;line-height:17.78px;color:#4f4f4f;letter-spacing:0.852px;transform:scale(1.000,1.212);transform-origin:0 15.05px;"><span class="bm"></span>СНИЛС:</div>
<div style="left:471.9px;top:660.0px;width:233.9px;height:37.6px;border:1.9px solid #a9a9a9;border-radius:4px;box-sizing:border-box;background:#fff"></div>
<div style="left:476.8px;top:670.67px;font-size:18.17px;line-height:18.17px;color:#2f2f2f;letter-spacing:0.690px;transform:scale(1.000,1.185);transform-origin:0 15.38px;"><span class="bm"></span>061-193-157 37</div>
<div style="left:715.1px;top:669.15px;font-size:20.50px;line-height:20.50px;color:#3a7cbc;transform:scale(1.000,1.030);transform-origin:0 17.35px;-webkit-text-stroke:0.4px #3a7cbc;"><span class="bm"></span>?</div>
<div style="left:713.9px;top:686.9px;width:15.0px;height:2.2px;background-image:linear-gradient(90deg,#6a84a0 66%,transparent 66%);background-size:3px 100%"></div>
<div style="left:29.8px;top:723.29px;font-size:18.22px;line-height:18.22px;color:#4f4f4f;letter-spacing:0.712px;transform:scale(1.000,1.182);transform-origin:0 15.43px;"><span class="bm"></span>Дата приема:</div>
<div style="left:187.4px;top:712.7px;width:123.9px;height:38.0px;border:1.8px solid #d5d5d5;border-radius:4px;box-sizing:border-box;background:#fff"></div>
<div style="left:192.4px;top:723.32px;font-size:18.58px;line-height:18.58px;color:#2f2f2f;letter-spacing:0.700px;transform:scale(1.000,1.159);transform-origin:0 15.73px;"><span class="bm"></span>01.06.2016</div>
<div style="left:327.7px;top:723.32px;font-size:18.54px;line-height:18.54px;color:#4f4f4f;letter-spacing:0.714px;transform:scale(1.000,1.161);transform-origin:0 15.70px;"><span class="bm"></span>Дата увольнения:</div>
<div style="left:498.6px;top:712.9px;width:124.1px;height:38.0px;border:1.8px solid #d5d5d5;border-radius:4px;box-sizing:border-box;background:#fff"></div>
<div style="left:517.6px;top:737.3px;width:2.6px;height:2.6px;background:#444"></div>
<div style="left:536.3px;top:737.3px;width:2.6px;height:2.6px;background:#444"></div>
<div style="left:631.7px;top:722.45px;font-size:20.50px;line-height:20.50px;color:#3a7cbc;transform:scale(1.000,1.030);transform-origin:0 17.35px;-webkit-text-stroke:0.4px #3a7cbc;"><span class="bm"></span>?</div>
<div style="left:630.5px;top:740.2px;width:15.0px;height:2.2px;background-image:linear-gradient(90deg,#6a84a0 66%,transparent 66%);background-size:3px 100%"></div>
<div style="left:29.8px;top:770.52px;font-size:18.53px;line-height:18.53px;color:#1f9a4e;letter-spacing:0.745px;transform:scale(1.000,1.162);transform-origin:0 15.68px;"><span class="bm"></span>Текущее место работы</div>
<div style="left:29.4px;top:809.11px;font-size:18.41px;line-height:18.41px;color:#4f4f4f;letter-spacing:0.740px;transform:scale(1.000,1.170);transform-origin:0 15.58px;"><span class="bm"></span>Должность:</div>
<div style="left:187.3px;top:797.5px;width:640.1px;height:37.6px;border:1.8px solid #d5d5d5;border-radius:4px;box-sizing:border-box;background:#fff"></div>
<div style="left:793.8px;top:798.5px;width:1.4px;height:35.5px;background:#c8c8c8"></div>
<svg style="position:absolute;left:804.0px;top:811.2px;width:15.0px;height:14.0px" viewBox="0 0 15 14" preserveAspectRatio="none"><path d="M4.5 4.5 V1 H14 V9.5 H10.5" fill="none" stroke="#4a4a4a" stroke-width="1.5"/><rect x="1" y="4.8" width="9.3" height="8.2" fill="none" stroke="#4a4a4a" stroke-width="1.5"/></svg>
<div style="left:194.2px;top:809.14px;font-size:18.78px;line-height:18.78px;color:#2f2f2f;letter-spacing:0.728px;transform:scale(1.000,1.147);transform-origin:0 15.90px;"><span class="bm"></span>Начальник отдела /Отдел диспетчерской службы/</div>
<div style="left:29.4px;top:861.82px;font-size:18.56px;line-height:18.56px;color:#4f4f4f;letter-spacing:0.755px;transform:scale(1.000,1.160);transform-origin:0 15.71px;"><span class="bm"></span>Подразделение:</div>
<div style="left:187.3px;top:850.6px;width:640.1px;height:37.5px;border:1.8px solid #d5d5d5;border-radius:4px;box-sizing:border-box;background:#fff"></div>
<div style="left:793.8px;top:851.5px;width:1.4px;height:35.5px;background:#c8c8c8"></div>
<svg style="position:absolute;left:804.0px;top:864.2px;width:15.0px;height:14.0px" viewBox="0 0 15 14" preserveAspectRatio="none"><path d="M4.5 4.5 V1 H14 V9.5 H10.5" fill="none" stroke="#4a4a4a" stroke-width="1.5"/><rect x="1" y="4.8" width="9.3" height="8.2" fill="none" stroke="#4a4a4a" stroke-width="1.5"/></svg>
<div style="left:194.2px;top:861.82px;font-size:18.70px;line-height:18.70px;color:#2f2f2f;letter-spacing:0.751px;transform:scale(1.000,1.152);transform-origin:0 15.83px;"><span class="bm"></span>Отдел диспетчерской службы</div>
<div style="left:29.4px;top:914.91px;font-size:18.38px;line-height:18.38px;color:#4f4f4f;letter-spacing:0.691px;transform:scale(1.000,1.172);transform-origin:0 15.56px;"><span class="bm"></span>Вид занятости:</div>
<div style="left:187.3px;top:903.8px;width:640.1px;height:37.5px;border:1.8px solid #d5d5d5;border-radius:4px;box-sizing:border-box;background:#fff"></div>
<div style="left:194.2px;top:914.90px;font-size:18.27px;line-height:18.27px;color:#2f2f2f;letter-spacing:0.739px;transform:scale(1.000,1.179);transform-origin:0 15.47px;"><span class="bm"></span>Основное место работы</div>
<div style="left:29.4px;top:962.25px;font-size:18.81px;line-height:18.81px;color:#2f4e96;letter-spacing:0.757px;transform:scale(1.000,1.145);transform-origin:0 15.93px;text-decoration:underline;text-decoration-skip-ink:none;text-decoration-thickness:1.6px;text-underline-offset:3.2px;"><span class="bm"></span>История переводов</div>
<div style="left:844.5px;top:810.04px;font-size:17.80px;line-height:17.80px;color:#4f4f4f;letter-spacing:0.680px;transform:scale(1.000,1.210);transform-origin:0 15.07px;"><span class="bm"></span>Оклад (тариф):</div>
<div style="left:1025.5px;top:797.2px;width:248.8px;height:37.9px;border:1.8px solid #d5d5d5;border-radius:4px;box-sizing:border-box;background:#fff"></div>
<div style="left:1191.2px;top:808.13px;font-size:18.66px;line-height:18.66px;color:#2f2f2f;letter-spacing:0.683px;transform:scale(1.000,1.154);transform-origin:0 15.80px;"><span class="bm"></span>5 762,00</div>
<div style="left:844.5px;top:861.82px;font-size:18.57px;line-height:18.57px;color:#4f4f4f;letter-spacing:0.674px;transform:scale(1.000,1.159);transform-origin:0 15.72px;"><span class="bm"></span>Северн. надб. (%):</div>
<div style="left:1025.5px;top:850.2px;width:92.7px;height:37.9px;border:1.8px solid #d5d5d5;border-radius:4px;box-sizing:border-box;background:#fff"></div>
<div style="left:1063.0px;top:861.32px;font-size:18.51px;line-height:18.51px;color:#2f2f2f;letter-spacing:0.697px;transform:scale(1.000,1.164);transform-origin:0 15.67px;"><span class="bm"></span>30,00</div>
<div style="left:844.5px;top:916.02px;font-size:17.67px;line-height:17.67px;color:#4f4f4f;letter-spacing:0.807px;transform:scale(1.000,1.219);transform-origin:0 14.95px;"><span class="bm"></span>ФОТ:</div>
<div style="left:1025.5px;top:903.5px;width:248.8px;height:37.9px;border:1.8px solid #d5d5d5;border-radius:4px;box-sizing:border-box;background:#fff"></div>
<div style="left:1191.0px;top:914.43px;font-size:18.64px;line-height:18.64px;color:#2f2f2f;letter-spacing:0.682px;transform:scale(1.000,1.156);transform-origin:0 15.77px;"><span class="bm"></span>9 219,20</div>
<div style="left:843.4px;top:968.03px;font-size:18.64px;line-height:18.64px;color:#4f4f4f;letter-spacing:0.719px;transform:scale(1.000,1.155);transform-origin:0 15.78px;"><span class="bm"></span>Аванс:</div>
<div style="left:1025.5px;top:956.8px;width:342.7px;height:37.7px;border:1.8px solid #d5d5d5;border-radius:4px;box-sizing:border-box;background:#fff"></div>
<div style="left:1031.5px;top:967.64px;font-size:18.73px;line-height:18.73px;color:#2f2f2f;letter-spacing:0.744px;transform:scale(1.000,1.150);transform-origin:0 15.86px;"><span class="bm"></span>Расчет первой половины месяца</div>
<div style="left:843.4px;top:1022.34px;font-size:17.92px;line-height:17.92px;color:#4f4f4f;letter-spacing:0.710px;transform:scale(1.000,1.202);transform-origin:0 15.17px;"><span class="bm"></span>График работы:</div>
<div style="left:1025.5px;top:1009.9px;width:342.7px;height:37.8px;border:1.8px solid #d5d5d5;border-radius:4px;box-sizing:border-box;background:#fff"></div>
<div style="left:1334.4px;top:1010.8px;width:1.4px;height:36.0px;background:#c8c8c8"></div>
<svg style="position:absolute;left:1344.6px;top:1023.3px;width:15.0px;height:14.0px" viewBox="0 0 15 14" preserveAspectRatio="none"><path d="M4.5 4.5 V1 H14 V9.5 H10.5" fill="none" stroke="#4a4a4a" stroke-width="1.5"/><rect x="1" y="4.8" width="9.3" height="8.2" fill="none" stroke="#4a4a4a" stroke-width="1.5"/></svg>
<div style="left:1031.5px;top:1020.37px;font-size:18.13px;line-height:18.13px;color:#2f2f2f;letter-spacing:0.752px;transform:scale(1.000,1.188);transform-origin:0 15.34px;"><span class="bm"></span>Пятидневка</div>
<div style="left:30.2px;top:1067.84px;font-size:18.77px;line-height:18.77px;color:#1f9a4e;letter-spacing:0.716px;transform:scale(1.000,1.147);transform-origin:0 15.89px;"><span class="bm"></span>Представление сотрудника в отчетах и документах</div>
<div style="left:665.8px;top:1104.2px;width:6.8px;height:2.1px;background:#3a78b8;border-radius:1px"></div>
<div style="left:693.5px;top:1099.8px;width:23.3px;height:10.2px;border:2px solid #a6a6a6;border-bottom:none;border-radius:3px 3px 0 0;box-sizing:border-box"></div>
<div style="left:728.0px;top:1104.3px;width:9.0px;height:2.0px;background:#444"></div>
<div style="left:986.4px;top:1093.6px;width:249.4px;height:16.4px;border:1.5px solid #cfcfcf;border-bottom:none;border-radius:4px 4px 0 0;box-sizing:border-box"></div>
<div style="left:10.5px;top:1106.5px;width:2112.5px;height:18.0px;background:#fff"></div>
<svg style="position:absolute;left:2107.8px;top:355.3px;width:10.0px;height:7.0px" viewBox="0 0 10 7" preserveAspectRatio="none"><path d="M0 7 H10 L5 0 Z" fill="#bdbdbd"/></svg>
<div style="left:2106.8px;top:378.5px;width:11.8px;height:690.5px;background:#d7d7d7;border-radius:6px"></div>
<div style="left:2106.8px;top:378.5px;width:11.8px;height:632.5px;background:linear-gradient(90deg,#a6a6a6,#9c9a9c 50%,#a6a6a6);border-radius:6px"></div>
<svg style="position:absolute;left:2107.5px;top:1085.5px;width:10.2px;height:7.0px" viewBox="0 0 10.2 7" preserveAspectRatio="none"><path d="M0 0 H10.2 L5.1 7 Z" fill="#565656"/></svg>
</body></html>
